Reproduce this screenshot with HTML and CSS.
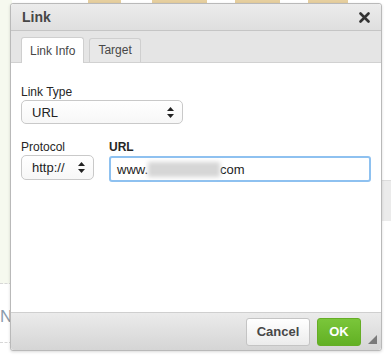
FILE: index.html
```html
<!DOCTYPE html>
<html lang="en">
<head>
    <meta charset="utf-8">
    <link rel="stylesheet" href="styles.css">
    <title>Link</title>
</head>
<body>
    <div class="page">
        <div class="page-top">
            <span class="tan tan-1"></span>
            <span class="tan tan-2"></span>
            <span class="tan tan-3"></span>
            <span class="tan tan-4"></span>
        </div>
        <div class="page-left">
            <div class="left-panel"></div>
            <div class="left-item">New</div>
        </div>
        <div class="page-right"></div>
    </div>

    <div class="dialog">
        <div class="dialog-title">
            <span class="title-text">Link</span>
            <svg class="close" width="11" height="11" viewBox="0 0 11 11"><path d="M1.5 1.5 L9.5 9.5 M9.5 1.5 L1.5 9.5" stroke="#333" stroke-width="2.6" stroke-linecap="round"/></svg>
        </div>
        <div class="tabs">
            <div class="tab active">Link Info</div>
            <div class="tab">Target</div>
        </div>
        <div class="dialog-body">
            <div class="field">
                <label class="label">Link Type</label>
                <div class="select select-type">
                    <span>URL</span>
                    <svg class="arrows" width="7" height="11" viewBox="0 0 7 11"><path d="M3.5 0 L7 4 L0 4 Z M0 7 L7 7 L3.5 11 Z" fill="#222"/></svg>
                </div>
            </div>
            <div class="row">
                <div class="field">
                    <label class="label">Protocol</label>
                    <div class="select select-proto">
                        <span>http://</span>
                        <svg class="arrows" width="7" height="11" viewBox="0 0 7 11"><path d="M3.5 0 L7 4 L0 4 Z M0 7 L7 7 L3.5 11 Z" fill="#222"/></svg>
                    </div>
                </div>
                <div class="field field-url">
                    <label class="label bold">URL</label>
                    <div class="input">www.<span class="blur"></span>com</div>
                </div>
            </div>
        </div>
        <div class="dialog-footer">
            <button class="btn btn-cancel">Cancel</button>
            <button class="btn btn-ok">OK</button>
            <span class="resize"></span>
        </div>
    </div>
</body>
</html>
```

FILE: styles.css
```css
body {
    margin: 0;
    background: #fff;
    font-family: "Liberation Sans", Arial, Helvetica, sans-serif;
    overflow: hidden;
}

.page {
    position: relative;
    width: 391px;
    height: 358px;
}
.page-top {
    height: 4px;
    display: flex;
}
.tan {
    position: absolute;
    top: 0;
    height: 4px;
    background: #e6cf9f;
}
.tan-1 { left: 88px; width: 33px; }
.tan-2 { left: 152px; width: 55px; }
.tan-3 { left: 235px; width: 45px; }
.tan-4 { left: 308px; width: 40px; }

.page-left {
    position: absolute;
    left: 0;
    top: 0;
    width: 12px;
}
.left-panel {
    height: 283px;
    background: #f6f9ef;
    border-bottom: 1px dashed #d7d7d7;
}
.left-item {
    height: 58px;
    line-height: 66px;
    font-size: 17px;
    color: #8b9bab;
    white-space: nowrap;
    border-bottom: 1px dashed #d7d7d7;
}
.page-right {
    position: absolute;
    right: 0;
    top: 180px;
    width: 9px;
    height: 40px;
    background: #ebebeb;
    border-top: 1px solid #dcdcdc;
}

.dialog {
    position: absolute;
    left: 10px;
    top: 3px;
    width: 370px;
    height: 346px;
    border: 1px solid #b9b9b9;
    border-radius: 3px;
    background: #fff;
    box-shadow: 0 1px 3px rgba(0, 0, 0, 0.15);
    display: flex;
    flex-direction: column;
}

.dialog-title {
    height: 26px;
    display: flex;
    align-items: center;
    justify-content: space-between;
    padding: 0 11px 0 11px;
    background: linear-gradient(#ececec, #dfdfdf);
    border-bottom: 1px solid #c5c5c5;
    border-radius: 3px 3px 0 0;
}
.title-text {
    font-size: 14px;
    font-weight: bold;
    color: #474747;
}
.close {
    display: block;
}

.tabs {
    height: 31px;
    display: flex;
    align-items: flex-end;
    gap: 5px;
    padding-left: 10px;
    background: #e5e5e5;
    border-bottom: 1px solid #d1d1d1;
}
.tab {
    height: 23px;
    line-height: 23px;
    padding: 0 8px;
    font-size: 12px;
    color: #474747;
    background: #e8e8e8;
    border: 1px solid #cfcfcf;
    border-bottom: none;
    border-radius: 3px 3px 0 0;
}
.tab.active {
    height: 25px;
    line-height: 26px;
    background: #fff;
    position: relative;
    top: 1px;
}

.dialog-body {
    flex: 1;
    padding: 22px 10px 0 10px;
}
.field {
    display: flex;
    flex-direction: column;
}
.label {
    font-size: 12px;
    color: #262626;
    line-height: 14px;
    margin-bottom: 1px;
}
.label.bold {
    font-weight: bold;
}
.row {
    display: flex;
    gap: 15px;
    margin-top: 16px;
}
.field-url {
    flex: 1;
}

.select {
    height: 22px;
    display: flex;
    align-items: center;
    justify-content: space-between;
    padding: 0 8px 0 10px;
    border: 1px solid #c9c9c9;
    border-radius: 5px;
    background: linear-gradient(#fff, #f7f7f7);
    font-size: 13px;
    color: #222;
}
.select-type {
    width: 142px;
}
.select-proto {
    width: 53px;
    height: 23px;
}
.arrows {
    display: block;
}

.input {
    height: 22px;
    display: flex;
    align-items: center;
    padding: 0 6px;
    margin-top: 1px;
    border: 2px solid #8ec1f0;
    border-radius: 3px;
    font-size: 13px;
    color: #222;
}
.blur {
    display: inline-block;
    width: 72px;
    height: 15px;
    background: #d6d6d6;
    filter: blur(2px);
}

.dialog-footer {
    height: 37px;
    display: flex;
    align-items: center;
    justify-content: flex-end;
    gap: 7px;
    padding-right: 20px;
    position: relative;
    background: linear-gradient(#ebebeb, #d5d5d5);
    border-top: 1px solid #cfcfcf;
    border-radius: 0 0 3px 3px;
}
.btn {
    height: 28px;
    font-family: "Liberation Sans", Arial, Helvetica, sans-serif;
    font-size: 13px;
    font-weight: bold;
    border-radius: 3px;
    cursor: pointer;
}
.btn-cancel {
    width: 64px;
    color: #474747;
    border: 1px solid #c4c4c4;
    background: linear-gradient(#fff, #ececec);
}
.btn-ok {
    width: 44px;
    color: #fff;
    border: 1px solid #65ad25;
    background: linear-gradient(#7ac63a, #62b024);
}
.resize {
    position: absolute;
    right: 4px;
    bottom: 6px;
    width: 0;
    height: 0;
    border-left: 9px solid transparent;
    border-bottom: 9px solid #7a7a7a;
}
```
